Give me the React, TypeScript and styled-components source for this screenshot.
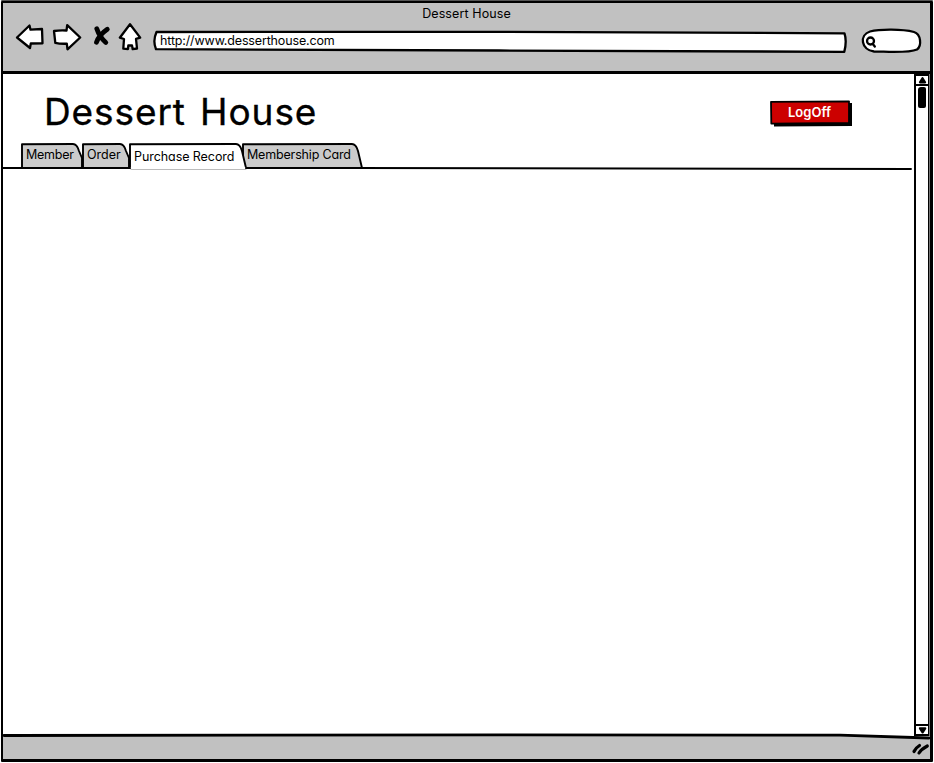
import React from "react";
import styled, { createGlobalStyle } from "styled-components";

const GlobalStyle = createGlobalStyle`
  * { box-sizing: border-box; }
  body { margin: 0; background: #fff; }
`;

const Browser = styled.div`
  width: 934px;
  height: 763px;
  padding: 1px;
  overflow: hidden;
  color: #000;
  font-family: Inter, Lato, sans-serif;
  font-feature-settings: "cv11";
  font-size: 12.5px;
  line-height: 16px;
`;

const Frame = styled.div`
  width: 932px;
  height: 761px;
  border: 3px solid #000;
  border-left-width: 2px;
  border-top-width: 2px;
  border-radius: 1px;
  display: grid;
  grid-template-rows: 71px 1fr 26px;
  box-shadow: 0 -1px 0 #555;
`;

const Chrome = styled.header`
  background: #c1c1c1;
  border-bottom: 3px solid #000;
  display: flex;
  flex-direction: column;
`;

const WindowTitle = styled.div`
  height: 21px;
  padding: 3px 0 0;
  text-align: center;
  letter-spacing: 0.1px;
`;

const Toolbar = styled.div`
  display: flex;
  height: 32px;
  padding-left: 11px;
`;

const Drawing = styled.svg`
  display: block;
  flex: none;
  overflow: visible;
  fill: #fff;
  stroke: #000;
  stroke-width: 2.3;
  stroke-linejoin: round;
  stroke-linecap: round;
`;

const Backdrop = styled(Drawing)`
  position: absolute;
  inset: 0;
`;

const Address = styled.div`
  position: relative;
  width: 696px;
  height: 32px;
  margin-left: 7px;
  padding: 9px 0 0 7px;
`;

const Label = styled.span<{ $spacing?: number }>`
  position: relative;
  display: block;
  white-space: nowrap;
  letter-spacing: ${(p) => p.$spacing ?? 0}px;
`;

const Search = styled.div`
  margin-left: 12px;
`;

const Viewport = styled.div`
  display: grid;
  grid-template-columns: 1fr 16px;
  min-height: 0;
`;

const Page = styled.main`
  display: flex;
  flex-direction: column;
`;

const Banner = styled.div`
  display: flex;
  justify-content: space-between;
  align-items: flex-start;
  height: 69px;
  padding: 15px 60px 0 41px;
`;

const Heading = styled.h1`
  margin: 0;
  font-size: 37px;
  line-height: 46px;
  font-weight: 400;
  letter-spacing: 0.9px;
  word-spacing: 3px;
  white-space: nowrap;
  -webkit-text-stroke: 0.35px #000;
`;

const LogOff = styled.button`
  position: relative;
  width: 84px;
  height: 27px;
  margin: 11px 0 0;
  padding: 0 5px 3px 0;
  border: 0;
  background: none;
  color: #fff;
  font: 600 13px/16px Inter, sans-serif;
  text-align: center;
`;

const TabRow = styled.nav`
  display: flex;
  height: 27px;
  padding-left: 18px;
  position: relative;
`;

const TabBox = styled.div<{ $width: number; $active?: boolean }>`
  position: relative;
  z-index: ${(p) => (p.$active ? 1 : 0)};
  width: ${(p) => p.$width}px;
  height: 27px;
  padding: ${(p) => (p.$active ? 6 : 4)}px 0 0 5px;
`;

const Scrollbar = styled.div`
  position: relative;
  z-index: 1;
  display: flex;
  flex-direction: column;
  margin-bottom: -3px;
  border-left: 2px solid #000;
  background: #fff;
  border-right: 1px solid #777;
`;

const ScrollButton = styled.div`
  height: 12px;
  border: solid #000;
  border-width: 2px 1px 2px 0;
`;

const Track = styled.div`
  flex: 1;
  padding: 1px 0 0 2px;
  border-right: 1px solid #000;
`;

const Thumb = styled.div`
  width: 8px;
  height: 21px;
  border-radius: 3px 2px 2px 2px;
  background: #000;
`;

const StatusBar = styled.footer`
  position: relative;
  background: #c1c1c1;
  display: flex;
  justify-content: flex-end;
  padding-right: 1px;
`;

type TabProps = {
  text: string;
  advance: number;
  shape: number;
  spacing?: number;
  active?: boolean;
};

function Tab({ text, advance, shape, spacing, active }: TabProps) {
  const outline = `M1 25V1.3L${shape - 10} 1Q${shape - 6} 1 ${shape - 4} 8`;
  const edge = shape > 100 ? `L${shape} 25` : `L${shape - 1} 15V25`;
  return (
    <TabBox $width={advance} $active={active}>
      <Backdrop width={shape + 2} height={27}>
        <path
          d={outline + edge + (active ? "" : "Z")}
          fill={active ? "#fff" : "#cbcbcb"}
          strokeWidth={1.9}
        />
        {active && (
          <>
            <path d={`M3 25H${shape - 2}`} stroke="#fff" strokeWidth={2.6} />
            <path d={`M2 26.5H${shape}`} stroke="#bbb" strokeWidth={1} />
          </>
        )}
      </Backdrop>
      <Label $spacing={spacing}>{text}</Label>
    </TabBox>
  );
}

export default function App() {
  return (
    <Browser>
      <GlobalStyle />
      <Frame>
        <Chrome>
          <WindowTitle>Dessert House</WindowTitle>
          <Toolbar>
            <Drawing width={132} height={32} viewBox="14 24 132 32">
              <path d="M17 37.5 29.5 25.5 30.5 29.7 42 29 42.5 43.3 30.8 43.5 30 48Z" />
              <path d="M54 31Q60 30 66.5 30.5L67.2 25.2 80.2 37.5 67.5 49.3 66.8 43.7Q60 44 55.3 42.8Z" />
              <path
                d="M96.8 28.8Q99.5 37 105.8 42.5M107.3 29.3Q99 35 96.5 42.3"
                fill="none"
                strokeWidth={4.8}
              />
              <path d="M130 24.2 119.8 37.7 124 39 123.3 48.7 128 49 128.3 45.5 132 45.4 132.7 49.2 137 48.5 136 38.8 140.2 37.6Z" />
            </Drawing>
            <Address>
              <Backdrop width={696} height={32} viewBox="154 24 696 32">
                <path d="M157.5 32 500 31.8 845.5 33.3Q848 41 845.3 51.8L500 50.5 157 49.2Q153.5 41 157.5 32Z" />
              </Backdrop>
              <Label $spacing={-0.15}>http://www.desserthouse.com</Label>
            </Address>
            <Search>
              <Drawing width={60} height={32} viewBox="861 24 60 32">
                <path d="M870 31.5C880 29 902 29 914 32 921 34 922 46 917 49.5 908 53.5 886 51.5 874 51.5 861 50 859 35 870 31.5Z" />
                <circle cx={870.5} cy={41} r={3.5} />
                <path d="M872.8 44 874.8 46.5" />
              </Drawing>
            </Search>
          </Toolbar>
        </Chrome>
        <Viewport>
          <Page>
            <Banner>
              <Heading>Dessert House</Heading>
              <LogOff>
                <Backdrop width={84} height={27}>
                  <path d="M4 4 82 3 82 26 4 26.5Z" fill="#000" stroke="none" />
                  <path
                    d="M1 1.8 79 1.3 79 23 1.3 23.6Z"
                    fill="#c00"
                    strokeWidth={1.8}
                  />
                </Backdrop>
                <Label>LogOff</Label>
              </LogOff>
            </Banner>
            <TabRow>
              <Backdrop width={909} height={27}>
                <path d="M0 25H350L908 26" strokeWidth={1.9} />
              </Backdrop>
              <Tab text="Member" advance={61} shape={62} spacing={-0.25} />
              <Tab text="Order" advance={47} shape={48} />
              <Tab text="Purchase Record" advance={113} shape={117} spacing={-0.07} active />
              <Tab text="Membership Card" advance={120} shape={120} spacing={-0.17} />
            </TabRow>
          </Page>
          <Scrollbar>
            <ScrollButton>
              <Drawing width={12} height={8}>
                <path d="M6.5 2.3 9 6.3H4Z" fill="#000" />
              </Drawing>
            </ScrollButton>
            <Track>
              <Thumb />
            </Track>
            <ScrollButton>
              <Drawing width={12} height={8}>
                <path d="M4 2.3H9.2L6.6 6.3Z" fill="#000" />
              </Drawing>
            </ScrollButton>
          </Scrollbar>
        </Viewport>
        <StatusBar>
          <Backdrop width={927} height={26}>
            <path d="M0 0H927V5L837 2.2 500 1.8 0 2.5Z" stroke="none" />
            <path d="M1 2.5 500 1.8 837 2.2 926 5" fill="none" strokeWidth={2.8} />
          </Backdrop>
          <Drawing width={20} height={26}>
            <path d="M5 18.5Q6.5 15 10.5 12.5M10 20Q12.5 16 18.3 13" fill="none" strokeWidth={3.2} />
          </Drawing>
        </StatusBar>
      </Frame>
    </Browser>
  );
}
